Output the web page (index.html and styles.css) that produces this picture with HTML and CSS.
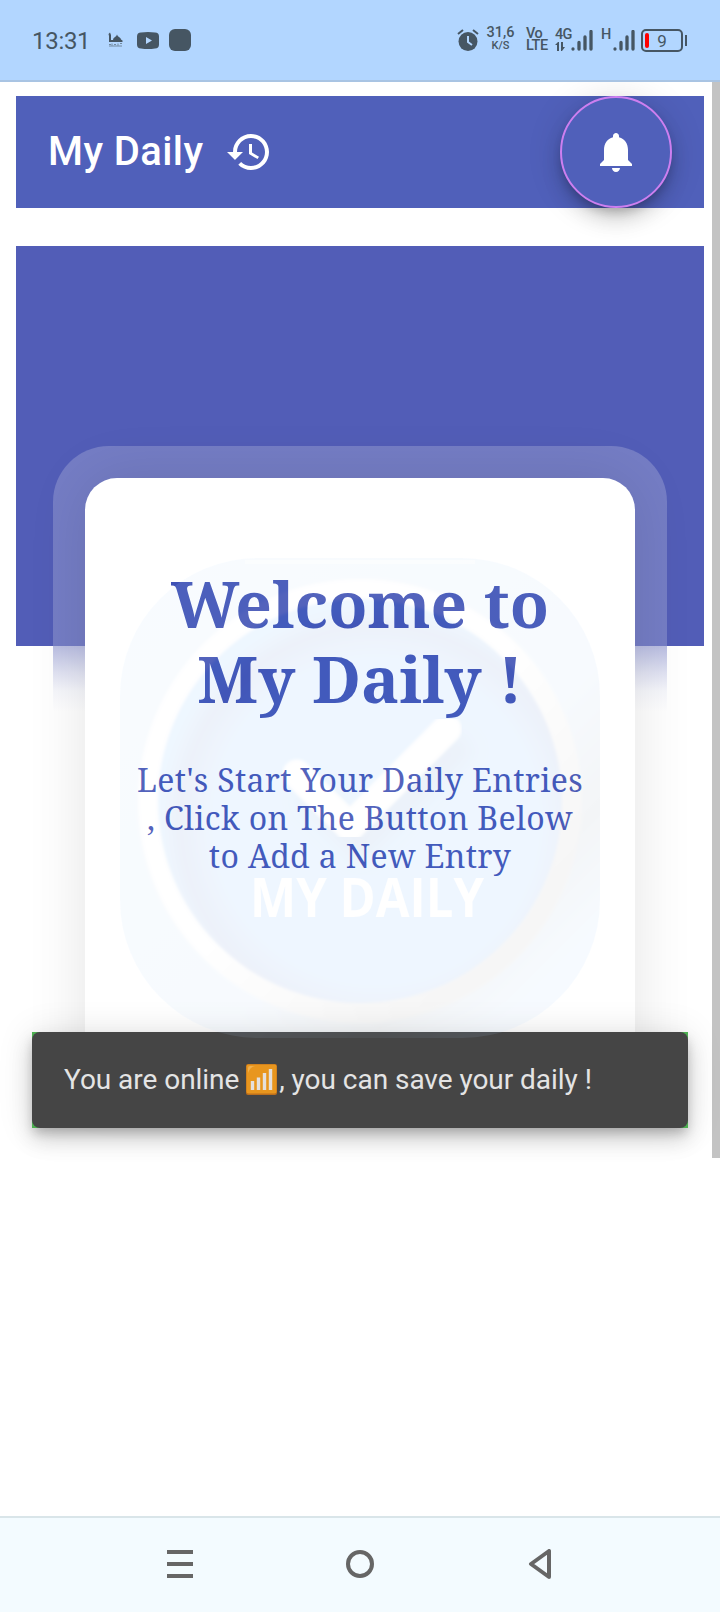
FILE: index.html
```html
<!DOCTYPE html>
<html lang="en">
<head>
<meta charset="utf-8">
<title>My Daily</title>
<link rel="stylesheet" href="styles.css">
</head>
<body>
<div class="screen">
  <header class="status">
    <span class="time">13:31</span>
    <svg class="mosque" width="15" height="16" viewBox="0 0 15 16"><path d="M1 11V5l-.5-2L2 1.500 3 4v5h2q0-2 2-3 1.500-.8 2-2.500Q9.500 5 11 6q2 1 2 2.500l1.500 1V11z"/><path d="M1 13.500h2m1-1v2m2-1h2m2-1v2m2-2h2M1 15h13" fill="none" stroke="#465663" opacity=".6"/></svg>
    <svg class="tube" width="22" height="17" viewBox="0 0 22 17"><path fill-rule="evenodd" d="M4 .5Q11-.5 18 .5q4 0 4 4v8q0 4-4 4-7 1-14 0-4 0-4-4v-8q0-4 4-4zM9 5v7l6-3.500z"/></svg>
    <span class="app-dot"></span>
    <span class="grow"></span>
    <svg class="alarm" width="22" height="22" viewBox="0 0 22 22"><circle cx="11" cy="12.500" r="9.500"/><path d="M1 5l5-4M21 5l-5-4" stroke="#465663" stroke-width="2"/><path d="M11 7v6l4 3" stroke="#b2d6ff" stroke-width="2" fill="none"/></svg>
    <span class="rate"><b>31,6</b><i>K/S</i></span>
    <span class="volte"><b>Vo</b><b>LTE</b></span>
    <span class="net"><b>4G</b><svg width="11" height="11" viewBox="0 0 11 11"><path d="M0 4l3-3h1v9H2V4zM6 1h2v5h2L7 10H6z"/></svg></span>
    <svg class="bars" width="22" height="21" viewBox="0 0 22 21"><path d="M2 19v.1M8 12.500V19M14 7v12M20 1.500V19" stroke="#465663" stroke-width="3.300" stroke-linecap="round"/></svg>
    <span class="hnet">H</span>
    <svg class="bars" width="22" height="21" viewBox="0 0 22 21"><path d="M2 19v.1M8 12.500V19M14 7v12M20 1.500V19" stroke="#465663" stroke-width="3.300" stroke-linecap="round"/></svg>
    <span class="battery"><i></i>9</span><span class="cap"></span>
  </header>

  <main class="app">
    <nav class="toolbar">
      <h1>My Daily</h1>
      <svg class="history" width="48" height="48" viewBox="0 0 24 24"><path d="M13 3c-4.970 0-9 4.030-9 9H1l3.890 3.890.070.140L9 12H6c0-3.870 3.130-7 7-7s7 3.130 7 7-3.130 7-7 7c-1.930 0-3.680-.79-4.940-2.060l-1.420 1.420C8.270 19.990 10.510 21 13 21c4.970 0 9-4.030 9-9s-4.030-9-9-9zm-1 5v5l4.280 2.540.72-1.210-3.500-2.080V8H12z"/></svg>
      <span class="grow"></span>
      <button class="fab"><svg width="48" height="48" viewBox="0 0 24 24"><path d="M12 22c1.100 0 2-.9 2-2h-4c0 1.100.89 2 2 2zm6-6v-5c0-3.070-1.640-5.640-4.500-6.320V4c0-.83-.67-1.500-1.500-1.500s-1.500.67-1.500 1.500v.68C7.630 5.360 6 7.920 6 11v5l-2 2v1h16v-1l-2-2z"/></svg></button>
    </nav>

    <section class="hero">
      <div class="halo">
        <article class="card">
          <h2><span>Welcome to</span><span>My Daily !</span></h2>
          <p><span>Let's Start Your Daily Entries</span><span>, Click on The Button Below</span><span>to Add a New Entry</span></p>
        </article>
      </div>
    </section>
    <div class="scrollbar"></div>

    <div class="snack-host"><div class="snack">You are online&nbsp;<svg width="31" height="31" viewBox="0 0 31 31"><rect width="31" height="31" rx="2" fill="#bd6f1c"/><rect x=".5" y=".5" width="30" height="29" rx="2" fill="#e8961e"/><path d="M2 9V4q0-2 2-2h5Q4 3 2 9z" fill="#efb04f"/><path d="M6.500 17v9M12.500 13.500V26M18.500 9v17M24.500 5v21" stroke="#e5e0dc" stroke-width="3.400"/></svg><span class="snack-tail">, you can save your daily !</span></div></div>

    <svg class="logo" width="480" height="480" viewBox="0 0 480 480">
      <defs>
        <linearGradient id="plate" x1="0" y1="0" x2="1" y2="1"><stop offset="0" stop-color="#bfdfff"/><stop offset=".6" stop-color="#b9d8fb"/><stop offset=".76" stop-color="#94a6b8"/><stop offset=".88" stop-color="#b2d6ff"/></linearGradient>
        <linearGradient id="rim" x1="0" y1="0" x2="1" y2="1"><stop offset=".5" stop-color="#fff"/><stop offset=".8" stop-color="#b2b2b2"/></linearGradient>
        <radialGradient id="face" cx=".54" cy=".55" r=".55"><stop offset="0" stop-color="#60b4ff"/><stop offset=".74" stop-color="#62adff"/><stop offset=".88" stop-color="#5a80d0"/><stop offset=".97" stop-color="#62b4ff"/></radialGradient>
        <filter id="soft" x="-30%" y="-30%" width="160%" height="160%"><feGaussianBlur stdDeviation="9"/></filter>
        <filter id="edge"><feGaussianBlur stdDeviation="1.500"/></filter>
      </defs>
      <rect width="480" height="480" rx="138" fill="url(#plate)"/>
      <path d="M125 4h230" stroke="#fff" stroke-width="4" opacity=".5"/>
      <circle cx="240" cy="243" r="222" fill="url(#rim)" filter="url(#edge)"/>
      <circle cx="240" cy="243" r="202" fill="url(#face)" filter="url(#edge)"/>
      <path d="M188 234l52 52 103-103" fill="none" stroke="#3854a0" stroke-width="28" opacity=".55" filter="url(#soft)"/>
      <path d="M177 216l53 53 97-98" fill="none" stroke="#fff" stroke-width="29" stroke-linecap="round" filter="url(#edge)"/>
      <text x="130" y="359" textLength="234" lengthAdjust="spacingAndGlyphs">MY DAILY</text>
    </svg>
  </main>

  <footer class="navbar">
    <svg width="26" height="28" viewBox="0 0 26 28"><path d="M0 2h26M0 14h26M0 26h26"/></svg>
    <svg width="28" height="28" viewBox="0 0 28 28"><circle cx="14" cy="14" r="12"/></svg>
    <svg width="28" height="30" viewBox="0 0 28 30"><path d="M22 2v26L4 15z" stroke-linejoin="round"/></svg>
  </footer>
</div>
</body>
</html>
```
FILE: styles.css
```css
* { box-sizing: border-box; }
body { margin: 0; background: #fff; font-family: Roboto, sans-serif; }
.screen { width: 720px; height: 1612px; display: flex; flex-direction: column; overflow: hidden; }
.grow { flex: 1; }
svg { display: block; flex: none; }

.status { height: 82px; flex: none; display: flex; align-items: flex-start; background: #b2d6ff; border-bottom: 2px solid #a9c4e3; padding: 0 33px 0 32px; color: #465663; fill: #465663; }
.time { width: 75px; margin-top: 26px; font-size: 24px; line-height: 30px; letter-spacing: -.3px; }
.mosque { margin: 31px 0 0 1px; }
.tube { margin: 32px 0 0 14px; }
.app-dot { width: 22px; height: 22px; margin: 29px 0 0 10px; border-radius: 6px; background: #465663; }
.alarm { margin-top: 29px; }
.status b, .status i { display: block; font-style: normal; font-weight: 500; white-space: nowrap; }
.rate { width: 31px; margin: 25px 0 0 6px; text-align: center; }
.rate b { font-size: 14.500px; line-height: 15px; }
.rate i { font-size: 11px; line-height: 11px; }
.volte { width: 23px; margin: 28px 0 0 10px; }
.volte b { font-size: 14.500px; line-height: 12px; letter-spacing: -.5px; }
.net { width: 17px; margin: 28px 0 0 6px; }
.net b { font-size: 14.500px; line-height: 13px; letter-spacing: -.8px; }
.bars { margin-top: 30px; }
.net + .bars { margin-left: -1px; }
.hnet { width: 13px; margin: 28px -1px 0 8px; font-size: 14.500px; font-weight: 500; line-height: 14px; }
.battery { display: flex; align-items: center; justify-content: center; position: relative; width: 42px; height: 23px; margin: 29px 0 0 6px; border: 2px solid #465663; border-radius: 5px; font-size: 17px; line-height: 18px; }
.battery i { position: absolute; left: 2px; top: 2px; width: 4px; height: 15px; border-radius: 2px; background: #f00; }
.cap { width: 2px; height: 11px; margin: 35px 0 0 2px; background: #465663; }

.app { position: relative; flex: 1; min-height: 0; overflow: hidden; padding: 14px 16px 0; }
.toolbar { height: 112px; display: flex; align-items: center; padding: 0 32px; background: #5060ba; color: #fff; fill: #fff; }
.toolbar h1 { width: 177px; margin: 0; font-size: 40px; font-weight: 500; line-height: 48px; letter-spacing: .4px; white-space: nowrap; }
.fab { width: 112px; height: 112px; padding: 0; display: grid; place-items: center; border: 2px solid #cd7ff0; border-radius: 50%; background: #5060ba; fill: #fff; box-shadow: 0 6px 10px -2px rgba(0,0,0,.2), 0 12px 20px rgba(0,0,0,.14), 0 2px 36px rgba(0,0,0,.12); }

.hero { height: 400px; margin-top: 38px; padding: 200px 37px 0; background: #525db7; }
.halo { height: 690px; padding: 32px 32px 0; border-radius: 56px 56px 0 0; background: linear-gradient(to bottom, rgba(255,255,255,.2) 200px, rgba(82,93,183,.4) 200px, rgba(82,93,183,.18) 226px, rgba(82,93,183,.05) 245px, rgba(82,93,183,0) 266px); }
.card { height: 610px; padding-top: 88px; border-radius: 32px 32px 0 0; background: #fff; box-shadow: 0 0 60px rgba(0,0,0,.11); color: #3f51b5; font-family: "Noto Serif", "Droid Serif", "DejaVu Serif", serif; text-align: center; }
.card h2 { margin: 0; font-size: 64px; line-height: 75px; font-weight: 700; }
.card span { display: block; white-space: nowrap; }
.card p { margin: 45px 0 0; font-size: 32px; line-height: 38px; letter-spacing: .33px; }

.scrollbar { position: absolute; right: 0; top: 0; width: 8px; height: 1076px; background: #c3c3c3; }
.snack-host { position: absolute; left: 32px; right: 32px; top: 950px; height: 96px; background: #4caf50; box-shadow: 0 6px 10px -2px rgba(0,0,0,.2), 0 12px 20px rgba(0,0,0,.14), 0 2px 36px rgba(0,0,0,.12); }
.snack { display: flex; align-items: center; height: 96px; padding: 0 32px 2px; border-radius: 8px; background: #454545; color: #e4e4e4; font-size: 28px; letter-spacing: -.04px; white-space: nowrap; }
.snack-tail { margin-left: 2px; }
.logo { position: absolute; left: 120px; top: 476px; opacity: .1; }
.logo text { font: 700 53px "Open Sans", sans-serif; fill: #fff; }

.navbar { flex: none; height: 96px; display: flex; align-items: center; gap: 153px; padding: 0 0 2px 167px; border-top: 2px solid #d9e5e9; background: #f3fbff; fill: none; stroke: #666; stroke-width: 4; }
```
